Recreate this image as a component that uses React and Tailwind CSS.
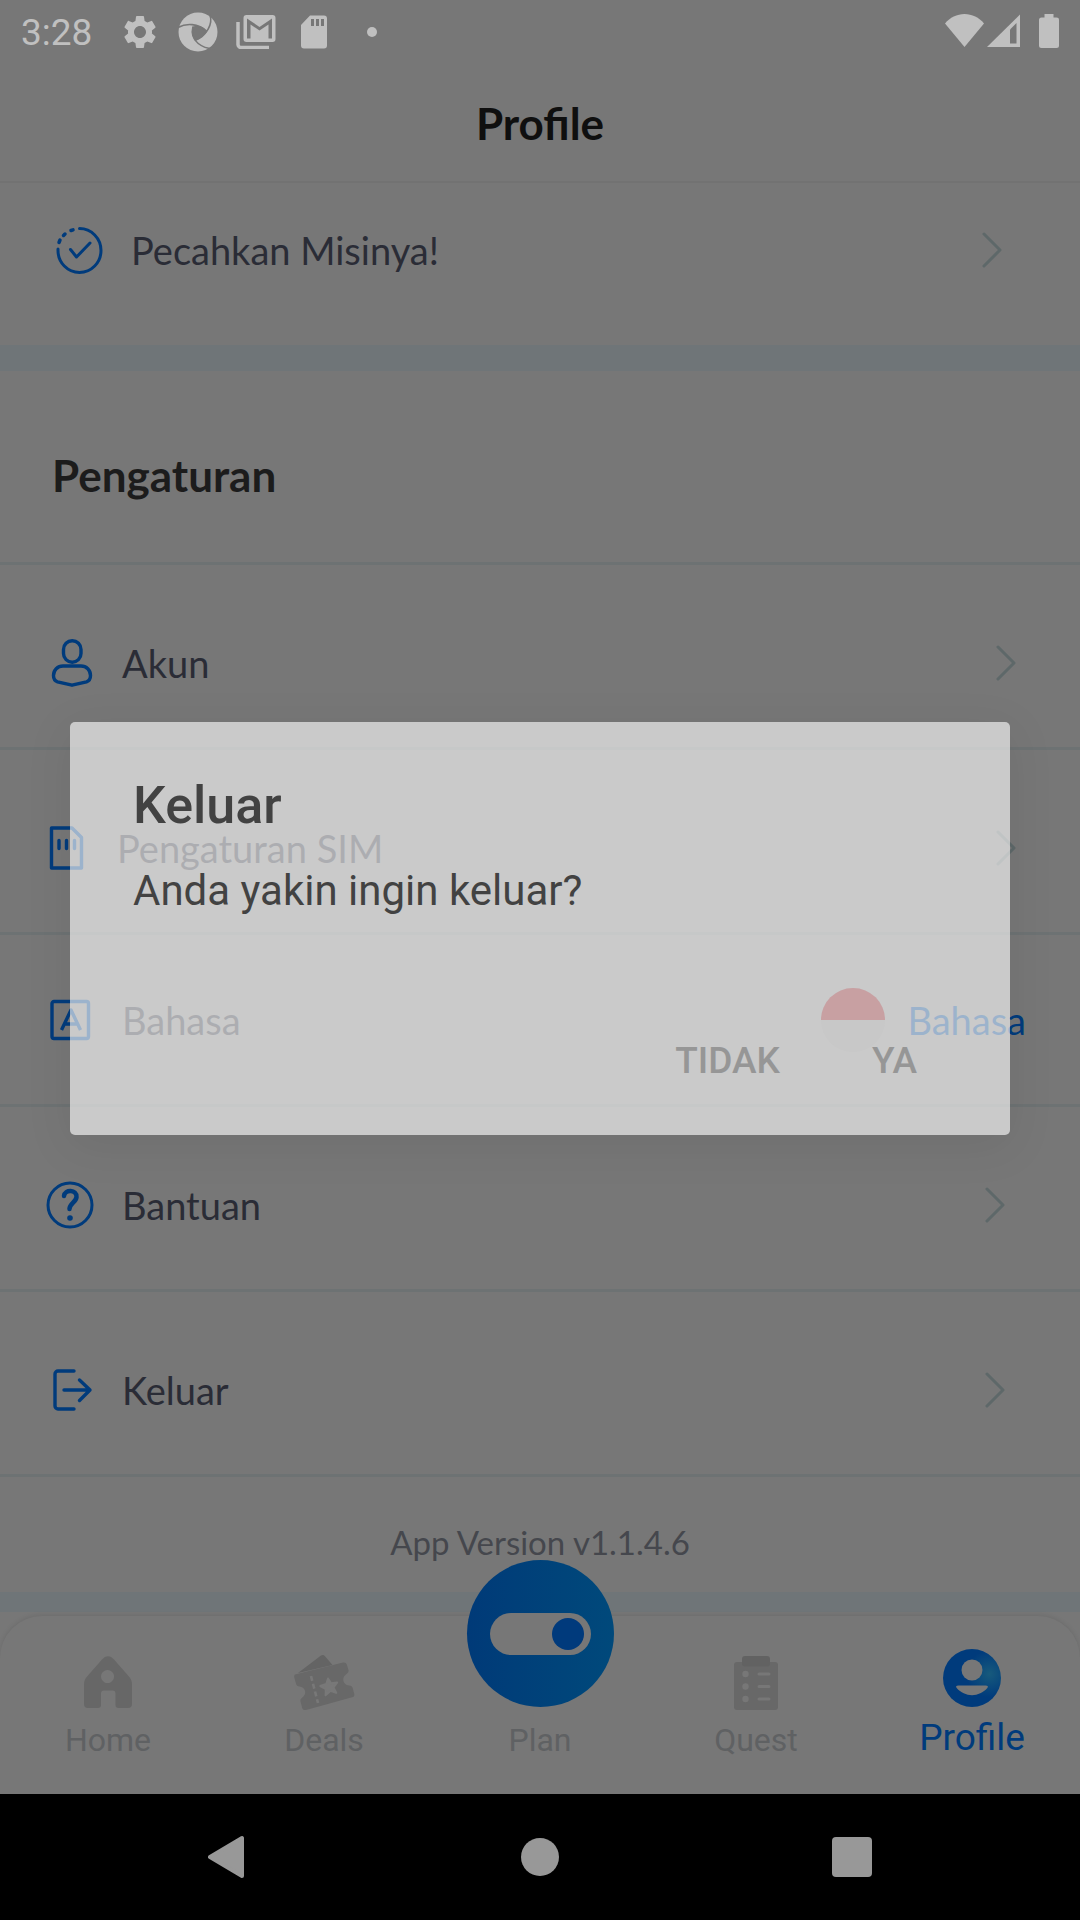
import { MdSettings } from "react-icons/md";

const BLUE = "#003b7c";

function RefreshSwirl() {
  return (
    <svg className="h-[40px] w-[40px]" viewBox="0 0 40 40">
      <circle cx="20" cy="20" r="19.5" fill="#c0c0c0" />
      <path d="M15 14.500C20 12.500 25.500 14 29 19.500 27 23.500 22.500 27.500 17 28.500 14 24.500 13.500 19 15 14.500z" fill="#777777" />
      <g fill="none" stroke="#777777" strokeWidth="1.600">
        <path d="M0 15.500C8 11 20 11 29 19.500" />
        <path d="M32 3C35 12 29 23 17 28.500" />
        <path d="M36 36.500C26 37 11 30 15 14.500" />
      </g>
    </svg>
  );
}

function MailStack() {
  return (
    <svg className="h-[34px] w-[40px]" viewBox="0 0 40 34">
      <path d="M2 7v22.500a3 3 0 0 0 3 3h28" fill="none" stroke="#c0c0c0" strokeWidth="3.500" />
      <rect x="7.500" y="0" width="32" height="27" rx="3" fill="#c0c0c0" />
      <path d="M11 3.500L23.500 12 36 3.500V23.500h-3.500V9.500L23.500 15.500 14.500 9.500V23.500H11z" fill="#777777" />
    </svg>
  );
}

function SdCard() {
  return (
    <svg className="h-[34px] w-[28px]" viewBox="0 0 28 34">
      <path d="M10 0.500h14a3 3 0 0 1 3 3v27a3 3 0 0 1-3 3H4a3 3 0 0 1-3-3V10z" fill="#c0c0c0" />
      <path d="M12.500 4v7M17.500 4v7M22.500 4v7" stroke="#777777" strokeWidth="3" />
    </svg>
  );
}

function StatusBar() {
  return (
    <div className="flex h-[63px] items-start pl-[21px] pr-[21px]">
      <span className="mt-[11px] text-[37px] leading-[44px] text-[#c0c0c0]">3:28</span>
      <div className="ml-[28px] mt-[11px] flex h-[41px] items-center">
        <MdSettings className="h-[40px] w-[40px] text-[#c0c0c0]" />
        <span className="ml-[18px]"><RefreshSwirl /></span>
        <span className="ml-[18px]"><MailStack /></span>
        <span className="ml-[24px]"><SdCard /></span>
        <span className="ml-[39px] h-[10px] w-[10px] rounded-full bg-[#c0c0c0]" />
      </div>
      <svg className="ml-auto mt-[14px] h-[34px] w-[114px]" viewBox="0 0 114 34">
        <g fill="#c0c0c0">
          <path d="M0 9.500C5 3.500 12 0 19.500 0S34 3.500 39 9.500L19.500 33z" />
          <path d="M42 33L75 0.500V33z" />
          <path d="M99.500 0h9v3.500h3a2.500 2.500 0 0 1 2.500 2.500v25.500a2.500 2.500 0 0 1-2.500 2.500H96.500a2.500 2.500 0 0 1-2.500-2.500V6a2.500 2.500 0 0 1 2.500-2.500h3z" />
        </g>
        <path d="M65 15.500L71.500 9v20.500H65z" fill="#777777" />
      </svg>
    </div>
  );
}

function Chevron() {
  return (
    <svg className="h-[36px] w-[20px] shrink-0" viewBox="0 0 20 36" fill="none" stroke="#5e6869" strokeWidth="3" strokeLinecap="round" strokeLinejoin="round">
      <path d="M2 2l16 16L2 34" />
    </svg>
  );
}

const line = { fill: "none", stroke: BLUE, strokeWidth: 3.4, strokeLinecap: "round", strokeLinejoin: "round" };

function MissionIcon() {
  return (
    <svg className="h-[48px] w-[48px]" viewBox="0 0 48 48" {...line} strokeWidth="3">
      <path d="M24.500 2.500a21.500 22 0 1 1-21.500 22v-1.500" />
      <path d="M4 16.500l1-2.500M8.500 9.500l1.500-1.500M16 4.500l2-.7" strokeWidth="3.500" />
      <path d="M15.500 23.500l6 7.500L35 17" />
    </svg>
  );
}

function UserIcon() {
  return (
    <svg className="h-[48px] w-[48px]" viewBox="0 0 48 48" {...line}>
      <rect x="17.500" y="1.700" width="17.500" height="21.500" rx="8.700" />
      <path d="M17 27h18c5.500 0 9.500 4 9.500 9.500 0 4-1.500 5.500-4 6.300L26 46.200 11.500 42.800c-2.500-.8-4-2.300-4-6.300C7.500 31 11.500 27 17 27z" />
    </svg>
  );
}

function SimIcon() {
  return (
    <svg className="h-[44px] w-[43px]" viewBox="0 0 43 44" {...line}>
      <path d="M5.500 2h20.500l9.500 9.500V42H5.500z" />
      <path d="M13 14.500v8M20.500 14.500v8M28.500 14.500v8" />
    </svg>
  );
}

function LanguageIcon() {
  return (
    <svg className="h-[42px] w-[48px]" viewBox="0 0 48 42" {...line}>
      <rect x="6" y="2.500" width="36.500" height="37" rx="2" />
      <path d="M15.500 31L25 11l9.500 20M19 25h12" strokeLinecap="butt" />
    </svg>
  );
}

function HelpIcon() {
  return (
    <svg className="h-[48px] w-[48px]" viewBox="0 0 48 48" {...line} strokeWidth="3">
      <circle cx="24" cy="24" r="22" />
      <path d="M18 15c.8-7 13-6.500 12.500 1 -.3 5-7 6.500-7 12" strokeWidth="4.500" />
      <circle cx="24" cy="37" r="2.800" fill={BLUE} stroke="none" />
    </svg>
  );
}

function LogoutIcon() {
  return (
    <svg className="h-[42px] w-[48px]" viewBox="0 0 48 42" {...line}>
      <path d="M28 2H12a3 3 0 0 0-3 3v32a3 3 0 0 0 3 3h16" />
      <path d="M18 21h26M33.500 11L44 21 33.500 31.500" />
    </svg>
  );
}

function SettingRow({ icon, label, end, pad }) {
  return (
    <li className="border-b-3 border-[#6d7273]">
      <button className={`flex h-[182px] w-full items-center gap-[28px] pl-[46px] pt-[13px] text-left ${pad}`}>
        {icon}
        <span className="flex-1 text-[38px] leading-[44px] text-[#2a2c36]">{label}</span>
        {end}
      </button>
    </li>
  );
}

function HomeIcon() {
  return (
    <svg className="h-[60px] w-[60px]" viewBox="0 0 60 60">
      <path fillRule="evenodd" fill="#676767" d="M24 9.500c3.500-4.500 8.500-4.500 12 0L50.500 26c2.500 3 3.500 5 3.500 8.500V54a4 4 0 0 1-4 4H40.500a3 3 0 0 1-3-3V43.500a3 3 0 0 0-3-3h-8.500a3 3 0 0 0-3 3V55a3 3 0 0 1-3 3H10a4 4 0 0 1-4-4V34.500C6 31 7 29 9.500 26zM29.500 20a6.500 6.500 0 1 0 .1 0z" />
    </svg>
  );
}

function DealsIcon() {
  return (
    <svg className="h-[60px] w-[62px]" viewBox="0 0 62 60">
      <path d="M5 23L28 5.500c1.500-1 3-.5 4 .7L39.500 15z" fill="#646464" />
      <path fill="#686868" d="M2 24.500L50 12.500c2-.4 3.300.4 3.800 2L55.500 20c.4 1.600-.4 2.800-2 4-5.500 3.500-3.500 11 2.700 11.500 2 .2 3 .8 3.500 2.500l1.600 6c.3 1.700-.5 2.800-2.200 3.200L13 60c-2 .4-3.300-.4-3.800-2L7.500 51.500c-.4-1.700.3-2.900 1.800-4 5-3.600 3.200-10.500-2.800-11-2-.2-3-1-3.400-2.500l-1.800-6.500c-.3-1.500 0-2.500.7-3z" />
      <path d="M18 26l7 27" stroke="#787878" strokeWidth="2.600" strokeDasharray="5 3" />
      <path d="M35 28.500l3.200 4.700 6-.8-3.700 5 2.800 5.500-6-2-4.700 4.300.2-6.200-5.500-3 6-2z" fill="#787878" stroke="#787878" strokeWidth="2" strokeLinejoin="round" />
    </svg>
  );
}

function QuestIcon() {
  return (
    <svg className="h-[60px] w-[60px]" viewBox="0 0 60 60">
      <rect x="8" y="12" width="44" height="48" rx="3" fill="#686868" />
      <rect x="16" y="6" width="28" height="10.500" rx="3" fill="#626262" />
      <g fill="#777777">
        <circle cx="19.500" cy="24" r="3.200" />
        <circle cx="19.500" cy="36.500" r="3.200" />
        <circle cx="19.500" cy="49" r="3.200" />
      </g>
      <path d="M33 24h10M33 36.500h10M33 49h10" stroke="#777777" strokeWidth="3" strokeLinecap="round" />
    </svg>
  );
}

function ProfileIcon() {
  return (
    <svg className="h-[60px] w-[60px]" viewBox="0 0 60 60">
      <defs>
        <radialGradient id="glow" cx="0.8" cy="0.43" r="0.4">
          <stop offset="0" stopColor="#175a7c" />
          <stop offset="1" stopColor={BLUE} />
        </radialGradient>
      </defs>
      <circle cx="30" cy="30" r="29" fill="url(#glow)" />
      <circle cx="30" cy="22" r="10.500" fill="#777777" />
      <path d="M16.500 37.500h27c2.500 0 3 1.200 1.800 2.500-8 9.500-22.600 9.500-30.600 0-1.200-1.300-.7-2.500 1.800-2.500z" fill="#777777" />
    </svg>
  );
}

function Tab({ icon, label }) {
  return (
    <a href="#" className="flex flex-1 flex-col items-center pb-[34px] text-[#5f6163]">
      {icon}
      <span className="mt-[10px] text-[32px] leading-[40px]">{label}</span>
    </a>
  );
}

export default function App() {
  return (
    <div className="relative flex min-h-screen flex-col bg-[#777777] font-[Roboto,sans-serif]">
      <StatusBar />
      <header className="flex h-[120px] items-center justify-center border-b-2 border-[#727272] pt-[2px] font-[Lato,sans-serif]">
        <h1 className="text-[44px] font-bold leading-[50px] text-[#0f0f0f]">Profile</h1>
      </header>

      <main className="flex-1 font-[Lato,sans-serif]">
        <button className="flex h-[162px] w-full items-center gap-[28px] pb-[28px] pl-[55px] pr-[78px] text-left">
          <MissionIcon />
          <span className="flex-1 text-[38px] leading-[44px] text-[#2a2c36]">Pecahkan Misinya!</span>
          <Chevron />
        </button>
        <div className="h-[26px] bg-[#6f7578]" />
        <h2 className="flex h-[194px] items-center border-b-3 border-[#6d7273] pl-[52px] pt-[16px] text-[44px] font-bold leading-[50px] text-[#1c1c1c]">
          Pengaturan
        </h2>
        <ul>
          <SettingRow icon={<UserIcon />} label="Akun" end={<Chevron />} pad="pr-[64px]" />
          <SettingRow icon={<SimIcon />} label="Pengaturan SIM" end={<Chevron />} pad="pr-[64px]" />
          <li className="border-b-3 border-[#6d7273]">
            <button className="flex h-[169px] w-full items-center gap-[28px] pl-[46px] pr-[54px] text-left text-[38px] leading-[44px]">
              <LanguageIcon />
              <span className="flex-1 text-[#2a2c36]">Bahasa</span>
              <span className="flex items-center gap-[22px] text-[#003b7c]">
                <span className="h-[64px] w-[64px] overflow-hidden rounded-full bg-[#717171]">
                  <span className="block h-1/2 bg-[#730a10]" />
                </span>
                Bahasa
              </span>
            </button>
          </li>
          <SettingRow icon={<HelpIcon />} label="Bantuan" end={<Chevron />} pad="pr-[75px]" />
          <SettingRow icon={<LogoutIcon />} label="Keluar" end={<Chevron />} pad="pr-[75px]" />
        </ul>
        <p className="flex h-[115px] items-center justify-center pt-[14px] text-[33px] leading-[40px] text-[#45474d]">
          App Version v1.1.4.6
        </p>
        <div className="h-[20px] bg-[#6f7578]" />
      </main>

      <nav className="mt-[4px] flex items-end rounded-t-[42px] bg-[#777777] pt-[32px] shadow-[0_-1px_5px_rgba(0,0,0,0.09)]">
        <Tab icon={<HomeIcon />} label="Home" />
        <Tab icon={<DealsIcon />} label="Deals" />
        <a href="#" className="-mt-[90px] flex flex-1 flex-col items-center pb-[34px] text-[#5f6163]">
          <span className="flex h-[147px] w-[147px] items-center justify-center rounded-full bg-linear-to-r from-[#003a78] to-[#00497b]">
            <span className="flex h-[42px] w-[101px] items-center justify-end rounded-full bg-[#777777] pr-[7px]">
              <span className="h-[32px] w-[32px] rounded-full bg-[#003a7c]" />
            </span>
          </span>
          <span className="mt-[13px] text-[32px] leading-[40px]">Plan</span>
        </a>
        <Tab icon={<QuestIcon />} label="Quest" />
        <a href="#" aria-current="page" className="flex flex-1 flex-col items-center pb-[34px] text-[#003b7c]">
          <ProfileIcon />
          <span className="mt-[8px] text-[37px] leading-[44px]">Profile</span>
        </a>
      </nav>

      <div className="flex h-[126px] items-center justify-center gap-[273px] bg-black">
        <button aria-label="Back">
          <svg className="h-[44px] w-[40px]" viewBox="0 0 40 44">
            <path d="M2 22L34 3v38z" fill="#989898" stroke="#989898" strokeWidth="4" strokeLinejoin="round" />
          </svg>
        </button>
        <button aria-label="Home" className="h-[38px] w-[38px] rounded-full bg-[#989898]" />
        <button aria-label="Recents" className="h-[40px] w-[40px] rounded-[4px] bg-[#989898]" />
      </div>

      <div className="absolute inset-0 flex items-center px-[70px] pb-[126px] pt-[63px]">
        <div role="alertdialog" aria-labelledby="dialog-title" aria-describedby="dialog-text" className="w-full rounded-[5px] bg-white px-[63px] pb-[28px] pt-[53px] text-[#222222] opacity-61 shadow-[0_10px_45px_rgba(0,0,0,0.1)]">
          <h2 id="dialog-title" className="text-[52px] font-medium leading-[62px]">Keluar</h2>
          <p id="dialog-text" className="mt-[29px] text-[42px] leading-[50px]">Anda yakin ingin keluar?</p>
          <div className="mt-[99px] flex justify-end gap-[44px] pr-[6px] text-[37px] font-medium leading-[44px] text-[#ababab]">
            <button className="px-[24px] py-[24px]">TIDAK</button>
            <button className="px-[24px] py-[24px]">YA</button>
          </div>
        </div>
      </div>
    </div>
  );
}
